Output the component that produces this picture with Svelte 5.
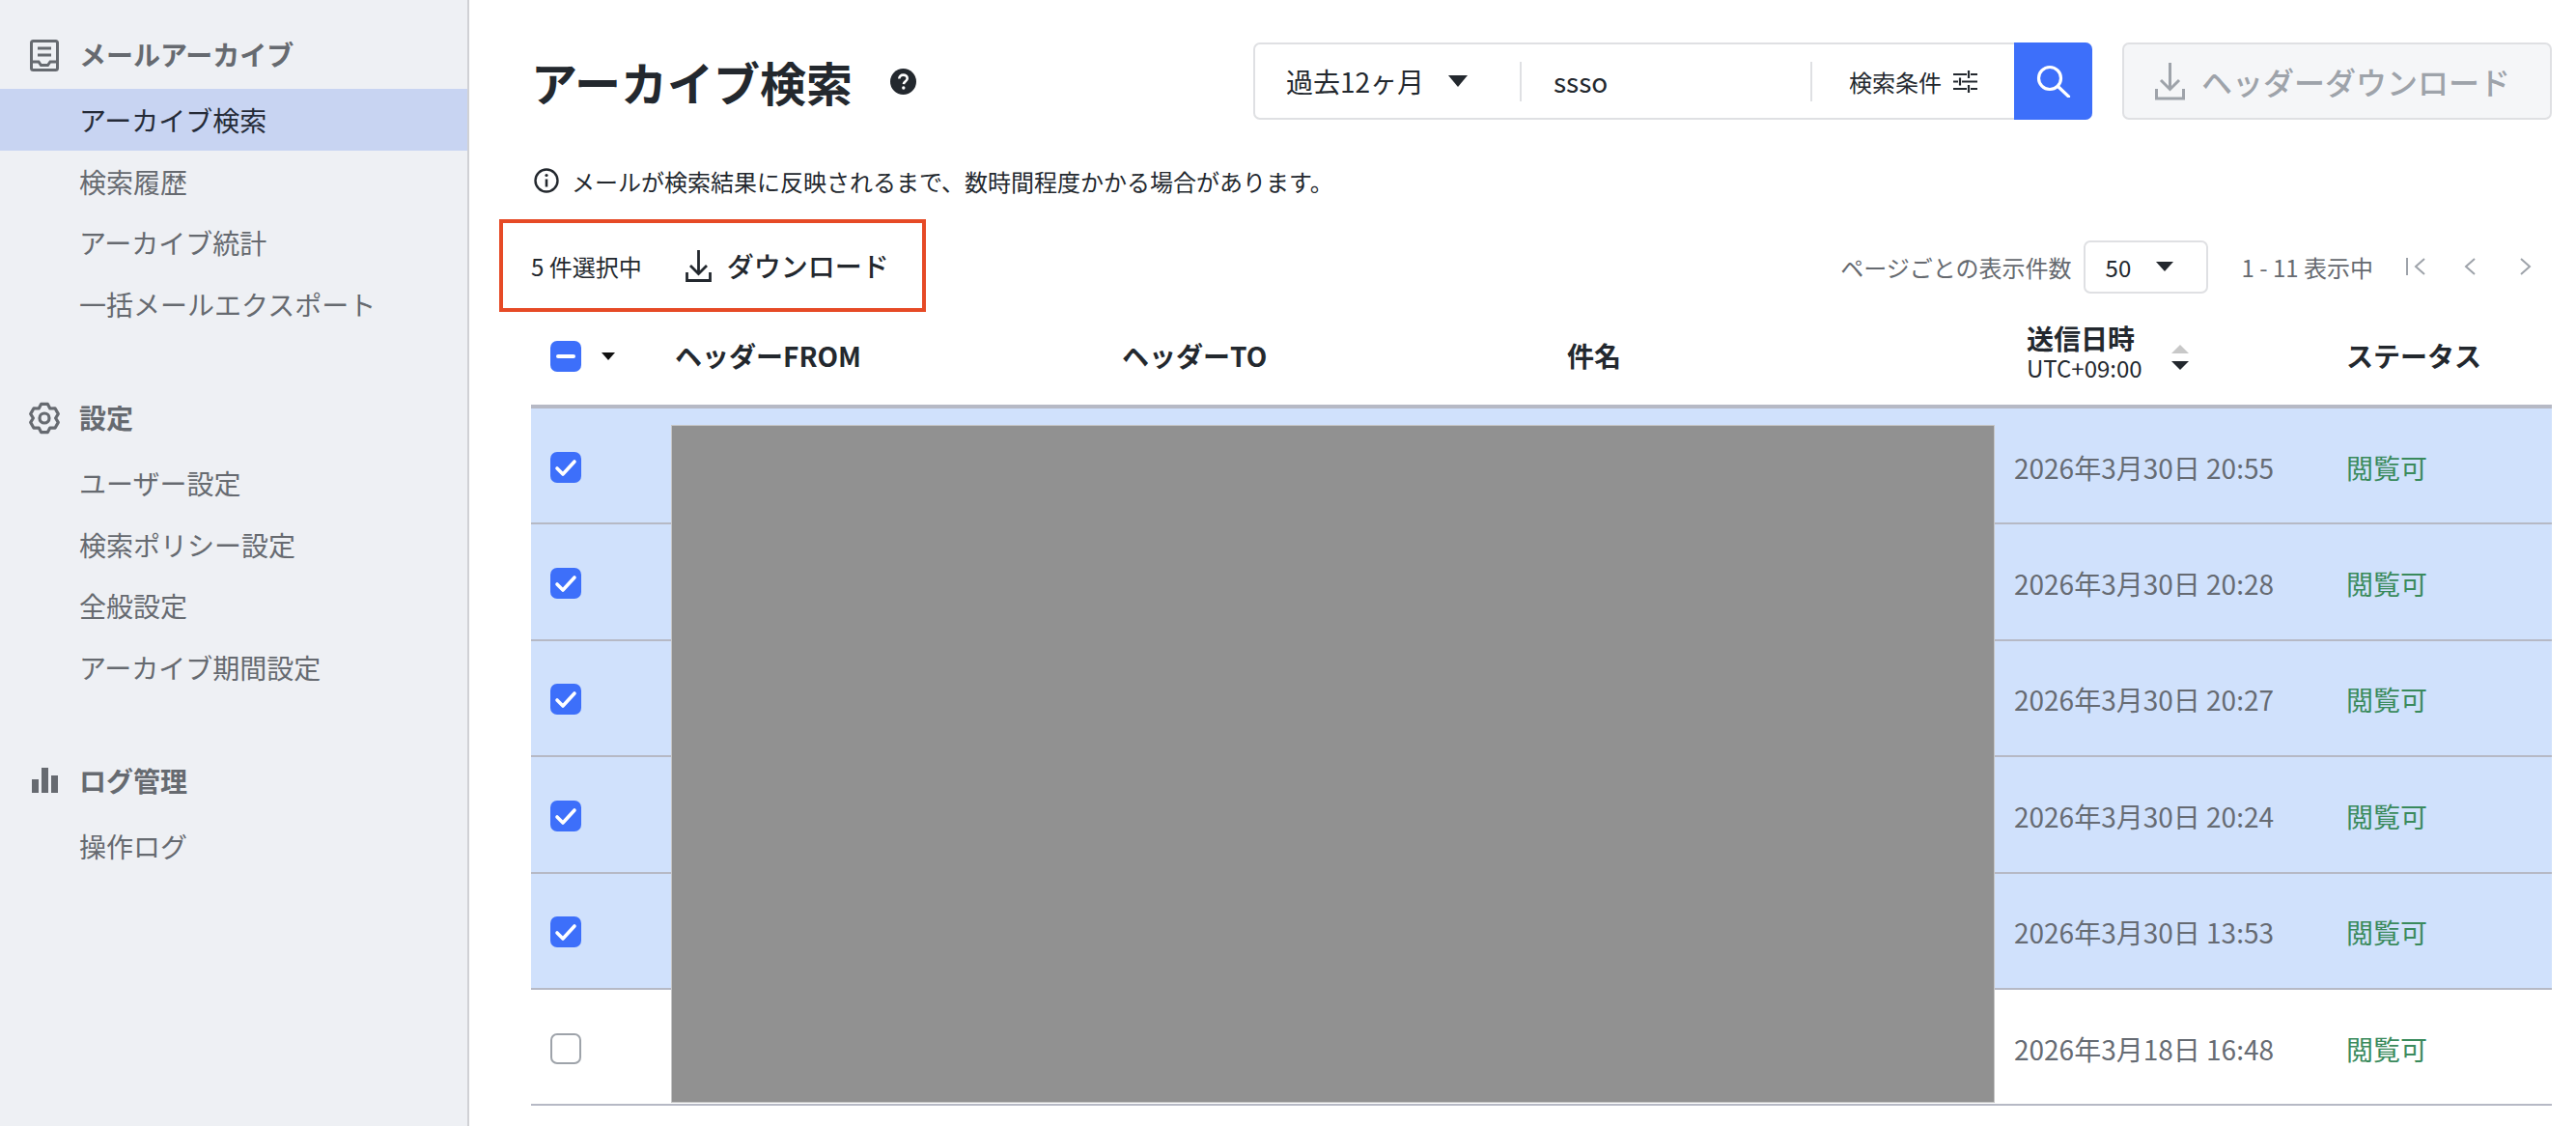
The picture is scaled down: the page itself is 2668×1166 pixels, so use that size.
<script>
    const sections = [
        { title: "メールアーカイブ", icon: "archive", items: ["アーカイブ検索", "検索履歴", "アーカイブ統計", "一括メールエクスポート"] },
        { title: "設定", icon: "gear", items: ["ユーザー設定", "検索ポリシー設定", "全般設定", "アーカイブ期間設定"] },
        { title: "ログ管理", icon: "chart", items: ["操作ログ"] }
    ];

    const rows = [
        { date: "2026年3月30日 20:55", checked: true },
        { date: "2026年3月30日 20:28", checked: true },
        { date: "2026年3月30日 20:27", checked: true },
        { date: "2026年3月30日 20:24", checked: true },
        { date: "2026年3月30日 13:53", checked: true },
        { date: "2026年3月18日 16:48", checked: false }
    ];

    // six lobed gear outline, centred on 17,17
    function gearPoints() {
        let pts = [];
        for (let i = 0; i < 6; i++) {
            const a = -90 + i * 60;
            for (const [r, d] of [[15, -13], [15, 13], [11.6, 30]]) {
                const t = ((a + d) * Math.PI) / 180;
                pts.push((17 + r * Math.cos(t)).toFixed(1) + "," + (17 + r * Math.sin(t)).toFixed(1));
            }
        }
        return pts.join(" ");
    }
</script>

<div class="page">
    <nav class="sidebar">
        {#each sections as section}
            <section class="group">
                <h2 class="group-title">
                    <span class="group-icon">
                        {#if section.icon == "archive"}
                            <svg width="30" height="33" viewBox="0 0 30 33" fill="none" stroke="#666a70" stroke-width="3">
                                <rect x="1.500" y="1.500" width="27" height="30" rx="2" />
                                <path d="M8 9h14M8 16h14" />
                                <path d="M1.500 23h7.500l2.500 3.500h7l2.500-3.500h7.500" />
                            </svg>
                        {:else if section.icon == "gear"}
                            <svg width="34" height="34" viewBox="0 0 34 34" fill="none" stroke="#666a70" stroke-width="3.200" stroke-linejoin="round">
                                <polygon points={gearPoints()} />
                                <circle cx="17" cy="17" r="5" />
                            </svg>
                        {:else}
                            <svg width="28" height="28" viewBox="0 0 28 28" fill="#666a70">
                                <rect x="1" y="12" width="7" height="14" />
                                <rect x="11" y="0" width="7" height="26" />
                                <rect x="21" y="8" width="7" height="18" />
                            </svg>
                        {/if}
                    </span>
                    {section.title}
                </h2>
                {#each section.items as item}
                    <a class="nav-item" class:active={item == "アーカイブ検索"} href="#top">{item}</a>
                {/each}
            </section>
        {/each}
    </nav>

    <main class="content">
        <header class="top">
            <h1>アーカイブ検索</h1>
            <svg class="help" width="27" height="27" viewBox="0 0 27 27">
                <circle cx="13.500" cy="13.500" r="13.500" fill="#23282e" />
                <path d="M9.300 10.600c0-2.500 1.900-4 4.200-4 2.400 0 4.200 1.500 4.200 3.600 0 3-3.600 3-3.800 5.900" fill="none" stroke="#fff" stroke-width="2.600" />
                <circle cx="13.800" cy="20" r="1.700" fill="#fff" />
            </svg>
            <div class="search">
                <div class="period">
                    <span>過去12ヶ月</span>
                    <span class="caret big"></span>
                </div>
                <div class="keyword">ssso</div>
                <div class="conditions">
                    <span>検索条件</span>
                    <svg width="25" height="23" viewBox="0 0 25 23" fill="none" stroke="#23282e" stroke-width="2.200">
                        <path d="M0 4h14M18 4h7M0 11.500h5M9 11.500h16M0 19h14M18 19h7M16 0v8M7 7.500v8M16 15v8" />
                    </svg>
                </div>
                <button class="search-btn" aria-label="検索">
                    <svg width="36" height="34" viewBox="0 0 36 34" fill="none" stroke="#fff" stroke-width="3.200">
                        <circle cx="14" cy="14" r="11.500" />
                        <path d="M22.500 22.500l11 10.500" stroke-linecap="round" />
                    </svg>
                </button>
            </div>
            <button class="header-download">
                <svg width="31" height="39" viewBox="0 0 31 39" fill="none" stroke="#9ea3aa" stroke-width="3">
                    <path d="M15.500 0v27M6 18l9.500 9.500L25 18M1.500 27v10h28V27" />
                </svg>
                ヘッダーダウンロード
            </button>
        </header>

        <p class="note">
            <svg width="26" height="26" viewBox="0 0 26 26" fill="none" stroke="#23282e">
                <circle cx="13" cy="13" r="11.500" stroke-width="2.400" />
                <path d="M13 11.500v8" stroke-width="2.600" />
                <circle cx="13" cy="7.500" r="1.600" fill="#23282e" stroke="none" />
            </svg>
            メールが検索結果に反映されるまで、数時間程度かかる場合があります。
        </p>

        <div class="toolbar">
            <div class="selection">
                <span class="count">5 件選択中</span>
                <span class="bulk">
                    <svg width="27" height="33" viewBox="0 0 27 33" fill="none" stroke="#23282e" stroke-width="2.800">
                        <path d="M13.500 0v24M5 16l8.500 8.500L22 16M1.500 23v8.500h24V23" />
                    </svg>
                    ダウンロード
                </span>
            </div>
            <div class="pager">
                <span class="muted">ページごとの表示件数</span>
                <div class="per-page">
                    <span>50</span>
                    <span class="caret"></span>
                </div>
                <span class="range">1 - 11 表示中</span>
                <svg class="nav first" width="21" height="18" viewBox="0 0 21 18" fill="none" stroke="#9ea3aa" stroke-width="2">
                    <path d="M1 0v18M19 1l-9 8 9 8" />
                </svg>
                <svg class="nav prev" width="12" height="18" viewBox="0 0 12 18" fill="none" stroke="#9ea3aa" stroke-width="2">
                    <path d="M11 1l-9 8 9 8" />
                </svg>
                <svg class="nav next" width="12" height="18" viewBox="0 0 12 18" fill="none" stroke="#9ea3aa" stroke-width="2">
                    <path d="M1 1l9 8-9 8" />
                </svg>
            </div>
        </div>

        <div class="table">
            <div class="row head">
                <div class="check-cell">
                    <span class="box on">
                        <svg width="32" height="32" viewBox="0 0 32 32"><path d="M8 16h16" stroke="#fff" stroke-width="4" stroke-linecap="round" /></svg>
                    </span>
                    <span class="caret tiny"></span>
                </div>
                <div class="head-text">ヘッダーFROM</div>
                <div class="head-text">ヘッダーTO</div>
                <div class="head-text">件名</div>
                <div class="date-head">
                    <div class="date-label">
                        <span>送信日時</span>
                        <small>UTC+09:00</small>
                    </div>
                    <div class="sort">
                        <span class="up"></span>
                        <span class="down"></span>
                    </div>
                </div>
                <div class="head-text">ステータス</div>
            </div>
            {#each rows as row}
                <div class="row" class:selected={row.checked}>
                    <div class="check-cell">
                        {#if row.checked}
                            <span class="box on">
                                <svg width="32" height="32" viewBox="0 0 32 32"><path d="M7 17l6 6 12-13" fill="none" stroke="#fff" stroke-width="3.600" stroke-linecap="round" stroke-linejoin="round" /></svg>
                            </span>
                        {:else}
                            <span class="box"></span>
                        {/if}
                    </div>
                    <div></div>
                    <div></div>
                    <div></div>
                    <div class="date">{row.date}</div>
                    <div class="status">閲覧可</div>
                </div>
            {/each}
            <div class="redacted"></div>
        </div>
    </main>
</div>

<style>
:global(body) {
    margin: 0;
    background: #fff;
    overflow: hidden;
}

.page {
    display: flex;
    height: 1166px;
    font-family: "Noto Sans CJK JP", "Noto Sans", sans-serif;
    color: #23282e;
}

.sidebar {
    width: 484px;
    flex: none;
    background: #eef0f4;
    border-right: 2px solid #d0d1d5;
    padding-top: 29px;
    box-sizing: content-box;
}

.group {
    margin-bottom: 57.800px;
}

.group-title {
    display: flex;
    align-items: center;
    height: 56px;
    box-sizing: border-box;
    margin: 0 0 7px;
    padding: 0 0 2px 82px;
    position: relative;
    font-size: 28px;
    font-weight: 700;
    color: #666a70;
}

.group-icon {
    position: absolute;
    left: 29px;
    top: 0;
    bottom: 0;
    width: 34px;
    display: flex;
    align-items: center;
    justify-content: center;
}

.nav-item {
    display: flex;
    align-items: center;
    height: 63.800px;
    padding-left: 82px;
    font-size: 28px;
    color: #666a70;
    text-decoration: none;
}

.nav-item.active {
    background: #c8d4f2;
    color: #252b38;
}

.content {
    flex: 1;
    min-width: 0;
    padding: 0 25px 0 64px;
}

.top {
    display: flex;
    align-items: center;
    height: 80px;
    margin-top: 44px;
}

h1 {
    margin: 0;
    font-size: 48px;
    font-weight: 700;
    line-height: 80px;
}

.help {
    margin-left: 39px;
}

.search {
    display: flex;
    align-items: center;
    margin-left: auto;
    width: 869px;
    height: 80px;
    box-sizing: border-box;
    border: 2px solid #dfe0e3;
    border-radius: 7px;
    font-size: 28px;
}

.period {
    display: flex;
    align-items: center;
    gap: 25px;
    width: 276px;
    box-sizing: border-box;
    height: 41px;
    padding-left: 32px;
    border-right: 2px solid #dfe0e3;
}

.keyword {
    width: 301px;
    box-sizing: border-box;
    height: 41px;
    line-height: 41px;
    padding-left: 33px;
    border-right: 2px solid #dfe0e3;
}

.conditions {
    display: flex;
    align-items: center;
    gap: 12px;
    flex: 1;
    padding-left: 38px;
    font-size: 24px;
}

.search-btn {
    width: 81px;
    height: 80px;
    margin: -2px;
    padding: 0;
    border: 0;
    border-radius: 0 7px 7px 0;
    background: #3d6ffa;
    display: flex;
    align-items: center;
    justify-content: center;
}

.header-download {
    display: flex;
    align-items: center;
    gap: 17px;
    width: 445px;
    height: 80px;
    margin-left: 31px;
    padding-left: 32px;
    box-sizing: border-box;
    background: #f5f6f8;
    border: 2px solid #dfe0e3;
    border-radius: 7px;
    color: #9ea3aa;
    font-family: inherit;
    font-size: 32px;
    font-weight: 500;
    white-space: nowrap;
}

.note {
    display: flex;
    align-items: center;
    gap: 13px;
    height: 40px;
    margin: 43px 0 0 3px;
    font-size: 24px;
}

.toolbar {
    display: flex;
    align-items: center;
    justify-content: space-between;
    margin-top: 20px;
    height: 96px;
}

.selection {
    display: flex;
    align-items: center;
    width: 442px;
    height: 96px;
    margin-left: -33px;
    padding-left: 29px;
    box-sizing: border-box;
    border: 4px solid #e64a26;
    font-size: 24px;
}

.bulk {
    display: flex;
    align-items: center;
    gap: 16px;
    margin-left: 45px;
    font-size: 28px;
    font-weight: 500;
}

.pager {
    display: flex;
    align-items: center;
    font-size: 24px;
    height: 56px;
    margin-top: 2px;
}

.muted {
    color: #666a70;
}

.per-page {
    display: flex;
    align-items: center;
    gap: 26px;
    width: 129px;
    height: 55px;
    margin-left: 12px;
    padding-left: 21px;
    box-sizing: border-box;
    border: 2px solid #dfe0e3;
    border-radius: 7px;
}

.range {
    margin-left: 35px;
    color: #666a70;
}

.nav.first { margin-left: 34px; }
.nav.prev { margin-left: 39px; }
.nav.next { margin-left: 46px; margin-right: 21px; }

.caret {
    width: 0;
    height: 0;
    border-left: 9px solid transparent;
    border-right: 9px solid transparent;
    border-top: 10px solid #23282e;
}

.caret.big {
    border-left-width: 10px;
    border-right-width: 10px;
    border-top-width: 12px;
}

.caret.tiny {
    border-left-width: 7px;
    border-right-width: 7px;
    border-top-width: 8px;
    border-top-color: #111;
    margin-left: 21px;
}

.table {
    position: relative;
    margin-top: 1px;
}

.row {
    display: grid;
    grid-template-columns: 149px 463px 461px 463px 344px 213px;
    align-items: center;
    height: 120.400px;
    padding-top: 3px;
    box-sizing: border-box;
    border-bottom: 2px solid #b6b9c5;
}

.row.head {
    height: 99px;
    padding: 0 0 6px;
    border-bottom-width: 4px;
    font-size: 28px;
    font-weight: 700;
}

.head-text {
    padding-bottom: 2px;
}

.row.selected {
    background: #d0e1fc;
}

.check-cell {
    display: flex;
    align-items: center;
    padding-left: 20px;
}

.box {
    display: block;
    width: 32px;
    height: 32px;
    box-sizing: border-box;
    border: 2px solid #9ea3aa;
    border-radius: 7px;
}

.box.on {
    border: 0;
    background: #3d6ffa;
}

.box svg {
    display: block;
}

.date-head {
    display: flex;
    align-items: center;
    padding-left: 13px;
}

.date-label {
    display: flex;
    flex-direction: column;
    line-height: 33px;
    margin-bottom: 8px;
}

.date-label small {
    font-size: 24px;
    font-weight: 400;
    line-height: 28px;
}

.sort {
    display: flex;
    flex-direction: column;
    gap: 8px;
    margin: 2px 0 0 30px;
}

.up, .down {
    width: 0;
    height: 0;
    border-left: 9px solid transparent;
    border-right: 9px solid transparent;
}

.up { border-bottom: 9px solid #c8c8c8; }
.down { border-top: 9px solid #23282e; }

.date {
    font-size: 28px;
    color: #666b73;
    white-space: nowrap;
}

.status {
    font-size: 28px;
    color: #3a8a5c;
}

.redacted {
    position: absolute;
    left: 145px;
    top: 116px;
    width: 1371px;
    height: 702px;
    box-sizing: border-box;
    background: #919191;
    border: 1px solid #c6c6c6;
}
</style>
